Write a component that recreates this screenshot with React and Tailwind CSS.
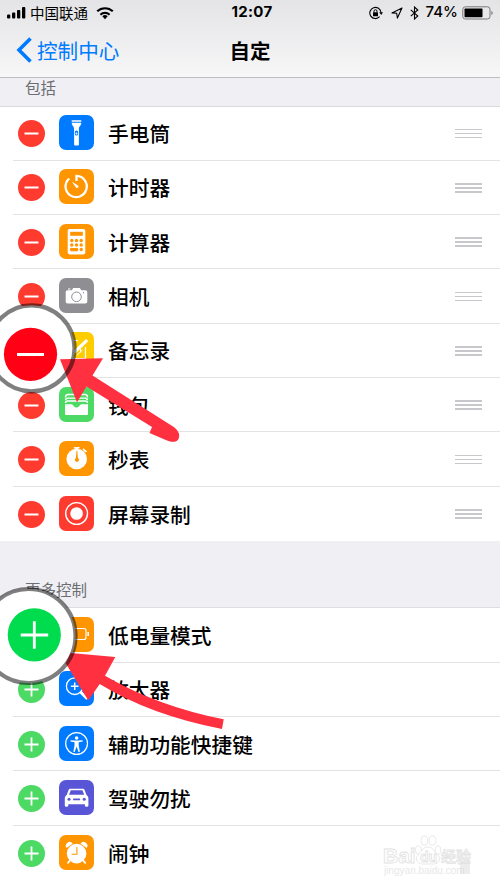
import React from 'react';

const FlashlightIcon = () => (
  <g fill="#fff">
    <path d="M12.7 5.2h9.6v1.6h-9.6zM12.7 7.7h9.6c0 3-2.4 3.6-2.4 6v15.8c0 .6-.3.9-.9.9h-3c-.6 0-.9-.3-.9-.9V13.7c0-2.4-2.4-3-2.4-6z" />
    <rect x="15.900" y="15.500" width="3.200" height="5" rx="1.600" fill="#007aff" />
    <circle cx="17.500" cy="18.600" r="1" fill="#fff" />
  </g>
);

const TimerIcon = () => (
  <g fill="none" stroke="#fff" strokeWidth="2.300">
    <path d="M10.2 9.500A10.600 10.600 0 1 0 17.500 6.900V12" />
    <path d="M12.800 12.500l6.600 4.300a1.600 1.600 0 0 1-2.100 2.100z" fill="#fff" stroke="none" />
  </g>
);

const CalculatorIcon = () => (
  <g>
    <rect x="8.700" y="5" width="17.600" height="25.400" rx="1.800" fill="#fff" />
    <rect x="11.200" y="7.800" width="12.600" height="4" fill="#ff9500" />
    {[16.5, 21, 25.5].map((y) =>
      [12.8, 17.5, 22.2].map((x) => <circle key={`${x}-${y}`} cx={x} cy={y} r="1.700" fill="#ff9500" />)
    )}
    <rect x="11.200" y="23.900" width="7.900" height="3.300" rx="1.500" fill="#ff9500" />
  </g>
);

const CameraIcon = () => (
  <g>
    <path d="M8.700 12.200h4l1.500-2.200h6.600l1.500 2.200h4c1.300 0 2 .8 2 2v9.300c0 1.300-.7 2-2 2H8.700c-1.300 0-2-.7-2-2v-9.300c0-1.200.7-2 2-2z" fill="#fff" />
    <path d="M9 11h2.500" stroke="#fff" strokeWidth="1" />
    <circle cx="17.500" cy="18.800" r="4.800" fill="#fff" stroke="#8e8e93" strokeWidth="1" />
    <circle cx="24.500" cy="14.700" r=".7" fill="#8e8e93" />
  </g>
);

const NotesIcon = () => (
  <g fill="none" stroke="#fff">
    <path d="M19 8.500H9v18h17.500V15" strokeWidth="1.200" />
    <path d="M14.500 19.500L27 7.500l1.800 1.600L17 20.500l-3 1z" fill="#fff" strokeWidth="1" />
    <path d="M18 23l5.500-5M21.500 16.500v4" strokeWidth="1" />
  </g>
);

const WalletIcon = () => (
  <g fill="none" stroke="#fff" strokeWidth="1.400">
    <path d="M6.500 10.500c0-2 1-3 2.500-3h17c1.500 0 2.500 1 2.500 3M6.500 13.300c0-1.500 1-2.200 2.500-2.200h17c1.500 0 2.500.7 2.500 2.200M6.500 16c0-1.500 1-2 2.500-2h17c1.500 0 2.500.5 2.500 2" />
    <path d="M6 17.200h6.500c1.500 0 2.500 3.300 5 3.300s3.500-3.300 5-3.300H29v9.300c0 1-.6 1.600-1.600 1.600H7.600c-1 0-1.600-.6-1.600-1.600z" fill="#fff" stroke="none" />
  </g>
);

const StopwatchIcon = () => (
  <g>
    <circle cx="17.700" cy="18" r="10.300" fill="#fff" />
    <path d="M14.900 6h5.600v1.500h-1.400V9h-2.800V7.500h-1.400zM24.300 7.200l4 3.200-1.600 1-3.200-2.600z" fill="#fff" />
    <path d="M17.500 9.800h.8l.6 7.200a2 2 0 1 1-2 0z" fill="#ff9500" />
  </g>
);

const RecordIcon = () => (
  <g>
    <circle cx="17.600" cy="17.500" r="10.900" fill="none" stroke="#fff" strokeWidth="1.400" />
    <circle cx="17.600" cy="17.500" r="6.300" fill="#fff" />
  </g>
);

const LowPowerIcon = () => (
  <g fill="none" stroke="#fff" strokeWidth="1.200">
    <rect x="6" y="11.500" width="21" height="11" rx="2.200" />
    <path d="M29.200 15v4" strokeWidth="1.600" />
  </g>
);

const MagnifierIcon = () => (
  <g fill="none" stroke="#fff">
    <circle cx="15.700" cy="15.200" r="8.300" strokeWidth="1.300" />
    <path d="M15.700 11.400v7.600M11.900 15.200h7.600" strokeWidth="1.500" />
    <path d="M22 21.500l5.500 5.500" strokeWidth="3" strokeLinecap="round" />
  </g>
);

const AccessibilityIcon = () => (
  <g>
    <circle cx="17.600" cy="17.500" r="10.900" fill="none" stroke="#fff" strokeWidth="1.200" />
    <circle cx="17.600" cy="12" r="1.800" fill="#fff" />
    <path d="M11.600 14.200l4.300.4h3.400l4.300-.4.1 1.200-4 .9v3.200l1.200 6.300-1.400.3-1.900-5.600-1.900 5.600-1.400-.3 1.200-6.300v-3.200l-4-.9z" fill="#fff" />
  </g>
);

const CarIcon = () => (
  <g>
    <path
      fillRule="evenodd"
      d="M11.600 8.700h12c1 0 1.700.4 2 1.300l1.900 5c1.300.8 1.900 2 1.900 3.500v7c0 .7-.4 1.200-1.200 1.200h-1.100c-.8 0-1.200-.5-1.200-1.200v-1.300H9.300v1.300c0 .7-.4 1.200-1.200 1.200H7c-.8 0-1.200-.5-1.200-1.200v-7c0-1.500.6-2.700 1.900-3.500l1.900-5c.3-.9 1-1.300 2-1.300zm.2 1.500L10 14.700h15.200l-1.800-4.500z"
      fill="#fff"
    />
    <circle cx="10" cy="19.300" r="1.500" fill="#5856d6" />
    <circle cx="25.200" cy="19.300" r="1.500" fill="#5856d6" />
    <rect x="14" y="18.500" width="7.200" height="1.800" rx=".9" fill="#5856d6" />
  </g>
);

const AlarmIcon = () => (
  <g>
    <circle cx="17.600" cy="18.600" r="9.800" fill="#fff" />
    <path d="M7.500 13a3.700 3.700 0 1 1 6.200-4.300zM27.700 13a3.700 3.700 0 1 0-6.200-4.300z" fill="#fff" />
    <path d="M11 25.500l-2 2.300M24.200 25.500l2 2.300" stroke="#fff" strokeWidth="1.800" strokeLinecap="round" />
    <path d="M17.900 12v7.200h-5.200" fill="none" stroke="#ff9500" strokeWidth="1.100" />
  </g>
);

const included = [
  { label: '手电筒', color: 'bg-[#007aff]', icon: FlashlightIcon },
  { label: '计时器', color: 'bg-[#ff9500]', icon: TimerIcon },
  { label: '计算器', color: 'bg-[#ff9500]', icon: CalculatorIcon },
  { label: '相机', color: 'bg-[#8e8e93]', icon: CameraIcon },
  { label: '备忘录', color: 'bg-[#ffcc00]', icon: NotesIcon },
  { label: '钱包', color: 'bg-[#4cd964]', icon: WalletIcon },
  { label: '秒表', color: 'bg-[#ff9500]', icon: StopwatchIcon },
  { label: '屏幕录制', color: 'bg-[#ff3b30]', icon: RecordIcon }
];

const more = [
  { label: '低电量模式', color: 'bg-[#ff9500]', icon: LowPowerIcon },
  { label: '放大器', color: 'bg-[#007aff]', icon: MagnifierIcon },
  { label: '辅助功能快捷键', color: 'bg-[#007aff]', icon: AccessibilityIcon },
  { label: '驾驶勿扰', color: 'bg-[#5856d6]', icon: CarIcon },
  { label: '闹钟', color: 'bg-[#ff9500]', icon: AlarmIcon }
];

const StatusBar = () => (
  <div className="grid grid-cols-3 items-center h-[25px] px-1.5 text-black">
    <div className="flex items-center">
      <svg className="w-5 h-3.5" viewBox="0 0 20 14">
        <rect x="1" y="8.500" width="3.300" height="4" rx="1" />
        <rect x="6" y="6.500" width="3.300" height="6" rx="1" />
        <rect x="11" y="4" width="3.300" height="8.500" rx="1" />
        <rect x="16" y="1" width="3.300" height="11.500" rx="1" />
      </svg>
      <span className="ml-1 text-[14.5px] leading-6">中国联通</span>
      <svg className="w-[18px] h-3.5 ml-2" viewBox="0 0 18 14" fill="none" stroke="#000" strokeWidth="2.200">
        <path d="M1.200 5.300a11.500 11.500 0 0 1 15.600 0" />
        <path d="M4.400 8.700a6.900 6.900 0 0 1 9.200 0" />
        <path d="M9 13.200l-2.700-2.900a4 4 0 0 1 5.400 0z" fill="#000" stroke="none" />
      </svg>
    </div>
    <span className="pl-1 text-center text-[15px] font-bold tracking-[0.3px] font-['Inter','Liberation_Sans',sans-serif]">12:07</span>
    <div className="flex items-center justify-end">
      <svg className="w-3.5 h-3.5" viewBox="0 0 14 14" fill="none" stroke="#000">
        <path d="M10.600 10.700A5.600 5.600 0 1 1 12 6.500" strokeWidth="1.100" />
        <path d="M10.200 6.200H14l-1.800 2.700z" fill="#000" stroke="none" />
        <rect x="4" y="6.200" width="5" height="4" rx=".5" fill="#000" stroke="none" />
        <path d="M5 6.400V5.200a1.500 1.500 0 0 1 3 0v1.200" />
      </svg>
      <svg className="w-3 h-3 ml-2" viewBox="0 0 12 12" fill="none" stroke="#000" strokeWidth="1.100">
        <path d="M11 1L1 5.900l4.700.4.700 4.800z" strokeLinejoin="round" />
      </svg>
      <svg className="w-[9px] h-3.5 ml-[7px]" viewBox="0 0 9 14" fill="none" stroke="#000" strokeWidth="1.100">
        <path d="M.8 3.800l7 6.200-3.300 3V1l3.300 3-7 6.200" />
      </svg>
      <span className="ml-[7px] text-[15px] font-medium font-['Inter','Liberation_Sans',sans-serif]">74%</span>
      <svg className="w-8 h-3.5 ml-1" viewBox="0 0 32 14">
        <rect x=".8" y=".8" width="27.200" height="12.200" rx="2.500" fill="none" stroke="#777" />
        <rect x="2.500" y="2.500" width="18" height="8.800" rx=".8" />
        <path d="M29.300 5c2 .5 2 3.500 0 4z" fill="#888" />
      </svg>
    </div>
  </div>
);

const NavBar = () => (
  <div className="grid grid-cols-3 items-center h-[52px] px-4 pb-px">
    <div className="flex items-center text-[#007aff] text-[20.6px]">
      <svg className="w-4 h-[26px] mr-[5px]" viewBox="0 0 16 26" fill="none" stroke="currentColor" strokeWidth="3.600">
        <path d="M14.500 1.500L3 13l11.500 11.500" />
      </svg>
      控制中心
    </div>
    <h1 className="text-center text-[20.5px] font-bold">自定</h1>
  </div>
);

const ControlRow = ({ item, included, last }) => {
  const Icon = item.icon;

  return (
    <li className="flex h-[54.3px] pl-[13px]">
      <div className={`flex flex-1 items-center pl-[5px] ${last ? '' : 'border-b border-[#e3e3e6]'}`}>
        <svg
          className={`w-[27px] h-[27px] mt-px rounded-full ${included ? 'bg-[#ff3b30]' : 'bg-[#4cd964]'}`}
          viewBox="0 0 27 27"
          stroke="#fff"
          strokeWidth="1.800"
        >
          <path d={included ? 'M6.500 13.500h14' : 'M6.500 13.500h14M13.500 6.500v14'} />
        </svg>
        <svg className={`w-[35px] h-[35px] mb-px ml-3.5 rounded-[7px] ${item.color}`} viewBox="0 0 35 35">
          <Icon />
        </svg>
        <span className="ml-3.5 text-[20.7px] font-medium leading-8">{item.label}</span>
        {included && (
          <div className="flex flex-col gap-[2.5px] w-[27px] ml-auto mr-[18px] mt-px">
            <div className="h-[1.5px] bg-[#c7c7cc]" />
            <div className="h-[1.5px] bg-[#c7c7cc]" />
            <div className="h-[1.5px] bg-[#c7c7cc]" />
          </div>
        )}
      </div>
    </li>
  );
};

// Arrows and zoomed buttons drawn over the list
const Annotations = () => (
  <svg className="absolute inset-0 w-[500px] h-[879px]" viewBox="0 0 500 879">
    <circle cx="31.500" cy="348.300" r="43" fill="#fff" />
    <circle cx="28.500" cy="636" r="47" fill="#fff" />
    <g fill="#ff3040">
      <path d="M60 359.300L103 358.300 92.500 375.500 173 426.500C178 430 180.500 434 178.500 439C176.500 443 171 442 167 440.500L149.500 433 152 427 86.500 386.500 77 402.300z" />
      <path d="M70.700 653L115.300 657 105 675.700Q157 706 223.700 719.300L222 729Q150 715 99.700 684L88.300 700.500 65.700 663.300z" />
    </g>
    <g fill="none" stroke="#000" strokeOpacity=".5" strokeWidth="4.200">
      <circle cx="31.500" cy="348.300" r="43" />
      <circle cx="28.500" cy="636" r="47" />
    </g>
    <circle cx="30.500" cy="354.300" r="26.600" fill="#ff0014" />
    <path d="M17 354.500h27" stroke="#fff" strokeWidth="3" />
    <circle cx="34.300" cy="634.800" r="26.600" fill="#00dc4e" />
    <path d="M20.700 635h27.500M34.300 621.300v27.500" stroke="#fff" strokeWidth="2.800" />
  </svg>
);

const Watermark = () => (
  <svg className="absolute right-0 bottom-0 w-[120px] h-[46px]" viewBox="0 0 120 46" fill="#fff" stroke="#e2e2e2" strokeWidth=".8">
    <text x="3" y="30" fontSize="21" fontWeight="700" fontFamily="Liberation Sans, sans-serif">Bai</text>
    <g>
      <ellipse cx="38.500" cy="17" rx="3" ry="4.200" />
      <ellipse cx="44.500" cy="7.500" rx="3.300" ry="4.700" />
      <ellipse cx="52.500" cy="7.500" rx="3.300" ry="4.700" />
      <ellipse cx="58" cy="17" rx="2.800" ry="4.200" />
      <path d="M48 14c5 0 6 4 9 7 5 4 2 10-3 10H42c-5 0-8-6-3-10 3-3 4-7 9-7z" />
    </g>
    <text x="40" y="29" fontSize="14" fontWeight="700" fontFamily="Liberation Sans, sans-serif">du</text>
    <text x="61" y="29" fontSize="15" fontWeight="500" fontFamily="Noto Sans CJK SC, sans-serif">经验</text>
    <text x="4" y="41" fontSize="10" stroke="none" fill="#e8e8e8" fontFamily="Liberation Sans, sans-serif">jingyan.baidu.com</text>
    <path d="M80 30h10v11H80z" stroke="none" fill="#d8d8d8" fillOpacity=".45" />
  </svg>
);

const App = () => {
  return (
    <div className="relative w-[500px] h-[879px] overflow-hidden bg-[#efeff4] text-black font-['Noto_Sans_CJK_SC',sans-serif]">
      <header className="h-[78px] bg-linear-to-b from-[#e4e4e6] to-[#f7f7f8] border-b border-[#bebec2]">
        <StatusBar />
        <NavBar />
      </header>

      {/* Included controls */}
      <h2 className="h-[28.5px] pl-[25px] text-[15.5px] leading-[19px] text-[#6d6d72] border-b border-[#d9d9de]">包括</h2>
      <ul className="bg-white">
        {included.map((item, i) => (
          <ControlRow key={item.label} item={item} included last={i === included.length - 1} />
        ))}
      </ul>

      {/* More controls */}
      <h2 className="h-[67.5px] pl-[25px] pt-[38px] text-[15.5px] leading-5 text-[#6d6d72] border-b border-[#dedee2]">更多控制</h2>
      <ul className="bg-white">
        {more.map((item, i) => (
          <ControlRow key={item.label} item={item} last={i === more.length - 1} />
        ))}
      </ul>

      <Annotations />
      <Watermark />
    </div>
  );
};

export default App;
